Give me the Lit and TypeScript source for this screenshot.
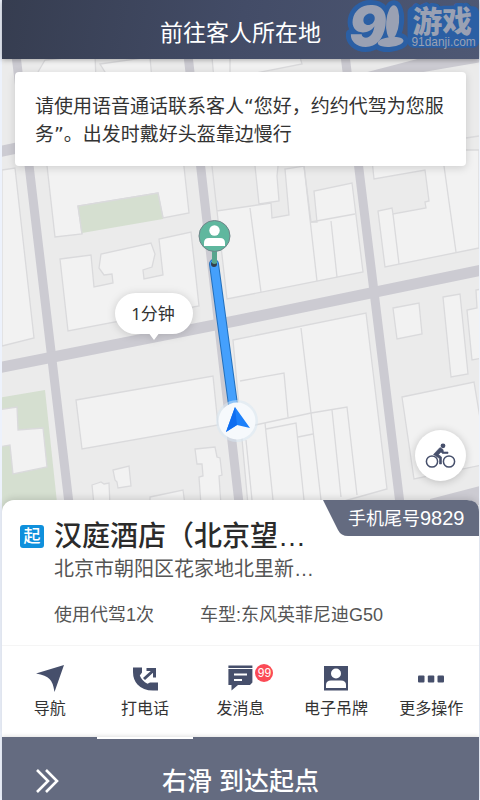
import { LitElement, html, css, svg } from "lit";
import { customElement, property } from "lit/decorators.js";

const BLOCKS: string[] = [
  "2,170 15,168 34,338 2,346",
  "43,130 55,237 82,234 78,206 158,193 163,218 189,213 180,130",
  "60,259 91,255 94,287 113,283 112,274 104,275 99,268 101,254 151,243 155,254 152,267 143,270 144,279 163,275 159,239 191,232 199,306 68,331",
  "208,130 217,211 271,203 272,218 289,215 285,169 304,166 311,222 317,222 314,191 352,183 363,272 227,299 217,211 208,130",
  "250,140 255,166 259,204 279,201 277,176 278,166 276,140",
  "371,150 374,179 425,170 429,201 425,202 426,208 393,214 392,208 378,211 385,267 479,248 479,150",
  "233,340 366,313 387,489 330,505 248,505",
  "393,308 419,303 422,334 397,339",
  "443,297 460,294 468,374 451,377",
  "482,289 476,290 477,308 467,310 472,360 482,358",
  "402,397 474,382 482,430 482,465 414,479",
  "76,400 213,376 218,425 82,449",
  "113,470 129,466 131,486 118,488 117,482 115,480",
  "92,485 98,483 101,482 104,484 109,483 110,505 94,505",
  "195,449 215,447 217,457 220,458 222,475 219,476 221,505 201,505 199,477 203,476 202,464 197,464",
  "150,497 183,490 185,505 150,505",
  "38,72 45,60 95,55 96,80 38,80",
  "100,64 150,57 152,80 110,80",
  "212,57 300,57 302,64 240,76 214,80",
];

const LINES: string[] = [
  "250,208 261,292",
  "311,222 355,214",
  "304,166 317,281",
  "331,221 337,277",
  "444,166 456,252",
  "393,214 399,264",
  "301,328 311,413 321,500",
  "240,381 284,373 288,417",
  "246,427 311,413 347,407 357,495",
  "265,423 273,500",
  "266,429 296,423 304,500",
  "298,437 313,434",
  "332,410 341,497",
  "246,440 252,500",
  "230,57 230,72",
  "466,138 479,136",
];

@customElement("city-map")
class CityMap extends LitElement {
  static styles = css`
    :host { display: block; }
    .map { display: block; width: 100%; height: 100%; }
    .block { fill: #f2f2f2; stroke: #dadadc; stroke-width: 1.3; }
    .line { fill: none; stroke: #dadadc; stroke-width: 1.3; }
    .road { fill: none; stroke: #cccbd2; }
    .eta {
      font-family: "Noto Sans", "Noto Sans CJK SC", sans-serif;
      font-size: 17px;
      fill: #333;
      text-anchor: middle;
    }
    .bubble { filter: drop-shadow(0 1px 4px rgb(0 0 0 / 0.16)); }
  `;

  render() {
    return html`
      <svg class="map" viewBox="2 59 477 453" preserveAspectRatio="xMidYMid slice" role="img" aria-label="地图">
        <rect x="-200" y="-200" width="1000" height="1000" fill="#ebebeb" />
        ${BLOCKS.map((p) => svg`<polygon class="block" points=${p} />`)}
        ${LINES.map((p) => svg`<polyline class="line" points=${p} />`)}
        <polygon points="78,206 158,193 163,219 82,233" fill="#d5dfd0" />
        <polyline class="line" points="82,234 78,206 158,193 163,218" />
        <polygon points="-2,398 45,390 58,512 -2,512" fill="#d5dfd0" />
        <polygon class="block" points="-2,410 17,407 18,430 43,428 47,467 13,474 10,445 -2,447" />
        <polygon points="352,76 425,57 482,57 482,62 400,76" fill="#cccbd2" />
        <polygon points="430,499 480,486 480,505 430,505" fill="#cccbd2" />
        <path class="road" stroke-width="9" d="M16 55 70 512M188 55 240 512M345 55 401 512" />
        <path class="road" stroke-width="11" d="M-2 368 240 320 482 270M-2 152 60 139" />

        <path d="M214 264 234 412" stroke="#2370bd" stroke-width="10" stroke-linecap="round" />
        <path d="M214 264 234 412" stroke="#45a0fc" stroke-width="8" stroke-linecap="round" />
        <circle cx="214" cy="264" r="3" fill="#333f4c" />
        <path d="M212 250h5v13q-2.500 2-5 0z" fill="#58a58e" />
        <circle cx="214.500" cy="236" r="15.500" fill="#5fb79e" stroke="#71858a" />
        <circle cx="214.500" cy="230.500" r="5.200" fill="#fff" />
        <path d="M204 246v-3q0-5 5-5h11q5 0 5 5v3z" fill="#fff" />

        <circle cx="237" cy="421" r="21" fill="#d8e8f4" opacity="0.5" />
        <circle cx="237" cy="421" r="18.500" fill="#f6f9fc" />
        <path d="M235 407 250 428 237 425 226 432z" fill="#1c80fa" />
        <path d="M235 407 237 425 226 432z" fill="#0f6df0" />

        <path
          class="bubble"
          fill="#fff"
          d="M135.500 293h37a20.500 20.500 0 0 1 0 41h-14l-4.500 6-4.500-6h-14a20.500 20.500 0 0 1 0-41z"
        />
        <text class="eta" x="153" y="320">1分钟</text>
      </svg>
    `;
  }
}

@customElement("site-mark")
class SiteMark extends LitElement {
  static styles = css`
    :host { display: block; }
    .mark { display: block; width: 100%; height: 100%; overflow: visible; }
    .halo { stroke: #2b5fa4; fill: #2b5fa4; stroke-width: 10; stroke-linejoin: round; }
    .face { fill: #9aa1b3; }
    .word {
      fill: #9aa1b3;
      stroke: #2b5fa4;
      stroke-width: 7;
      stroke-linejoin: round;
      paint-order: stroke;
    }
    .nine { font: italic 900 56px Inter, sans-serif; stroke-width: 10; }
    .name { font: 900 30px "Noto Sans CJK SC", sans-serif; }
    .site { font: 400 12px "Liberation Sans", sans-serif; }
  `;

  render() {
    const one = svg`
      <ellipse cx="53" cy="22" rx="6.500" ry="17" transform="rotate(5 53 22)" />
      <ellipse cx="51" cy="42" rx="13" ry="5" transform="rotate(-6 51 42)" />`;
    return html`
      <svg class="mark" viewBox="0 0 140 56" aria-hidden="true">
        <rect x="68" y="6" width="72" height="42" rx="6" fill="#2b5fa4" />
        <g class="halo">${one}</g>
        <text class="word nine" x="9" y="46">9</text>
        <g class="face">${one}</g>
        <text class="word name" x="73" y="32">游戏</text>
        <text class="face site" x="72" y="46">91danji.com</text>
      </svg>
    `;
  }
}

const ICONS = {
  nav: svg`<path d="M28 1 0 9.500Q10 11 13.500 15 17 18 18.500 28z" />`,
  call: svg`<path d="M2 3.500H11V8.500L8.800 11.500Q11 17 16.500 19.800L19 18.500H27V26.500H22Q12 26.500 6.500 20.500 2 15.500 2 8z" />
    <path d="M15.500 5.500H23.500V13.500M23.500 5.500 13 15" fill="none" stroke="#464f6b" stroke-width="3" />`,
  message: svg`<path d="M2.400 1.500H26.400V4H2.400zM2.400 5H26.400V18.500L24 21H12L5.500 26.500V21H2.400z" />
    <path d="M8 10.500H21M8 16H16" stroke="#fff" stroke-width="2" />`,
  card: svg`<path d="M2 2H26V26.500H2z" />
    <circle cx="14" cy="9.500" r="5" fill="#fff" />
    <path d="M4 24V21Q4 16.500 9 16.500H19Q24 16.500 24 21V24z" fill="#fff" />`,
  more: svg`<rect x="1" y="11.500" width="6.500" height="7" rx="1" />
    <rect x="10.800" y="11.500" width="6.500" height="7" rx="1" />
    <rect x="20.500" y="11.500" width="6.500" height="7" rx="1" />`,
};

interface Action {
  icon: keyof typeof ICONS;
  label: string;
  badge?: number;
  current?: boolean;
}

@customElement("app-root")
class AppRoot extends LitElement {
  @property({ attribute: false }) actions: Action[] = [
    { icon: "nav", label: "导航" },
    { icon: "call", label: "打电话", current: true },
    { icon: "message", label: "发消息", badge: 99 },
    { icon: "card", label: "电子吊牌" },
    { icon: "more", label: "更多操作" },
  ];

  static styles = css`
    :host {
      display: flex;
      flex-direction: column;
      box-sizing: border-box;
      min-height: 100vh;
      padding: 0 1px 0 2px;
      background: #edf2fc;
      font-family: "Liberation Sans", "Noto Sans CJK SC", sans-serif;
      color: #333;
    }
    h1, h2, p { margin: 0; font-weight: 400; }
    button {
      margin: 0;
      padding: 0;
      border: 0;
      background: none;
      font: inherit;
      color: inherit;
      cursor: pointer;
    }
    .top {
      position: relative;
      z-index: 1;
      padding: 15px 0 8px;
      background: linear-gradient(100deg, #363d50, #434c67 50%, #4e5874);
      box-shadow: 0 1px 5px rgb(0 0 0 / 0.3);
      text-align: center;
    }
    .heading { font-size: 23px; line-height: 36px; color: #fff; }
    .mark { position: absolute; top: 0; right: 0; width: 139px; height: 56px; }
    .stage { position: relative; flex: 1; min-height: 300px; display: flex; }
    .map { position: absolute; inset: 0 0 -12px; }
    .notice {
      position: relative;
      flex: 1;
      align-self: flex-start;
      margin: 13px 13px 0;
      padding: 20px 18px 18px 20px;
      border-radius: 4px;
      background: #fff;
      box-shadow: 0 2px 8px rgb(0 0 0 / 0.15);
      font-family: "DejaVu Sans", "Noto Sans CJK SC", sans-serif;
      font-size: 19px;
      line-height: 28px;
    }
    .ride {
      position: absolute;
      right: 13px;
      bottom: 19px;
      width: 51px;
      height: 51px;
      border-radius: 50%;
      background: #fff;
      box-shadow: 0 1px 8px rgb(0 0 0 / 0.2);
      display: grid;
      place-items: center;
    }
    .bike { width: 31px; height: 26px; }
    .sheet {
      position: relative;
      border-radius: 12px 12px 0 0;
      background: #fff;
      box-shadow: 0 -2px 6px rgb(0 0 0 / 0.12);
    }
    .tail {
      position: absolute;
      top: 0;
      right: 0;
      box-sizing: border-box;
      width: 156px;
      height: 36px;
      padding-left: 25px;
      background: #646b80;
      clip-path: path("M0 0H144Q156 0 156 12V36H25Q18 36 15 30Z");
      color: #fff;
      font-size: 18px;
      line-height: 36px;
      white-space: nowrap;
    }
    .digits { font-size: 20px; }
    .order {
      display: grid;
      grid-template-columns: 24px 1fr;
      column-gap: 10px;
      padding: 17px 18px 16px;
      border-bottom: 1px solid #f5f5f5;
    }
    .start {
      align-self: center;
      height: 23px;
      border-radius: 3px;
      background: #0f90dc;
      color: #fff;
      font-size: 17px;
      font-weight: 500;
      line-height: 23px;
      text-align: center;
    }
    .detail { grid-column: 2; }
    .place { font-size: 28px; font-weight: 500; line-height: 39px; color: #2b2b2b; }
    .address { font-size: 20px; line-height: 26px; color: #555; }
    .facts {
      display: flex;
      gap: 46px;
      margin-top: 19px;
      font-size: 18px;
      line-height: 28px;
      color: #555;
    }
    .actions { display: grid; grid-template-columns: repeat(5, 1fr); }
    .action {
      position: relative;
      display: flex;
      flex-direction: column;
      align-items: center;
      gap: 5px;
      padding: 18px 0 16px;
      font-size: 16px;
      line-height: 24px;
    }
    .current::after {
      content: "";
      position: absolute;
      z-index: 1;
      inset: auto 0 -2px;
      height: 2px;
      background: #fff;
    }
    .glyph { position: relative; width: 28px; height: 28px; }
    .icon { display: block; width: 28px; height: 28px; fill: #464f6b; }
    .badge {
      position: absolute;
      top: 0;
      left: 29px;
      width: 18px;
      height: 18px;
      border-radius: 50%;
      background: #fb4a55;
      color: #fff;
      font-size: 12px;
      line-height: 18px;
      text-align: center;
    }
    .slide {
      position: relative;
      padding: 26px 0 1px;
      background: #646b80;
      color: #fff;
      font-size: 25px;
      font-weight: 500;
      line-height: 36px;
      box-shadow: 0 -1px 4px rgb(0 0 0 / 0.12);
    }
    .chevrons { position: absolute; left: 32px; bottom: 6px; width: 26px; height: 26px; }
  `;

  render() {
    return html`
      <header class="top">
        <h1 class="heading">前往客人所在地</h1>
        <site-mark class="mark"></site-mark>
      </header>

      <main class="stage">
        <city-map class="map"></city-map>
        <p class="notice">请使用语音通话联系客人“您好，约约代驾为您服务”。出发时戴好头盔靠边慢行</p>
        <button class="ride" aria-label="骑行">
          <svg class="bike" viewBox="0 0 31 26" fill="none" stroke="#464f6b">
            <circle cx="7" cy="18.500" r="5.600" stroke-width="1.500" />
            <circle cx="24" cy="18.500" r="5.600" stroke-width="1.500" />
            <circle cx="18" cy="2.800" r="2.400" fill="#464f6b" stroke="none" />
            <path d="M8.500 11.500 15 4.500 18 6.500 18.500 9 23 9V10.500H17.500L16 9 13.500 11.500 16.500 14V21H14.500V15.500z" fill="#464f6b" stroke-width="0.600" />
          </svg>
        </button>
      </main>

      <section class="sheet">
        <div class="tail">手机尾号<span class="digits">9829</span></div>
        <div class="order">
          <span class="start">起</span>
          <h2 class="place">汉庭酒店（北京望…</h2>
          <p class="address detail">北京市朝阳区花家地北里新…</p>
          <div class="facts detail"><span>使用代驾1次</span><span>车型:东风英菲尼迪G50</span></div>
        </div>
        <nav class="actions">
          ${this.actions.map(
            (a) => html`
              <button class="action ${a.current ? "current" : ""}">
                <span class="glyph">
                  <svg class="icon" viewBox="0 0 28 28" aria-hidden="true">${ICONS[a.icon]}</svg>
                  ${a.badge ? html`<span class="badge">${a.badge}</span>` : ""}
                </span>
                ${a.label}
              </button>
            `
          )}
        </nav>
      </section>

      <button class="slide">
        <svg class="chevrons" viewBox="0 0 26 26" fill="none" stroke="#fff" stroke-width="2.600" aria-hidden="true">
          <path d="M3 2 14 13 3 24M12 2 23 13 12 24" />
        </svg>
        右滑 到达起点
      </button>
    `;
  }
}
